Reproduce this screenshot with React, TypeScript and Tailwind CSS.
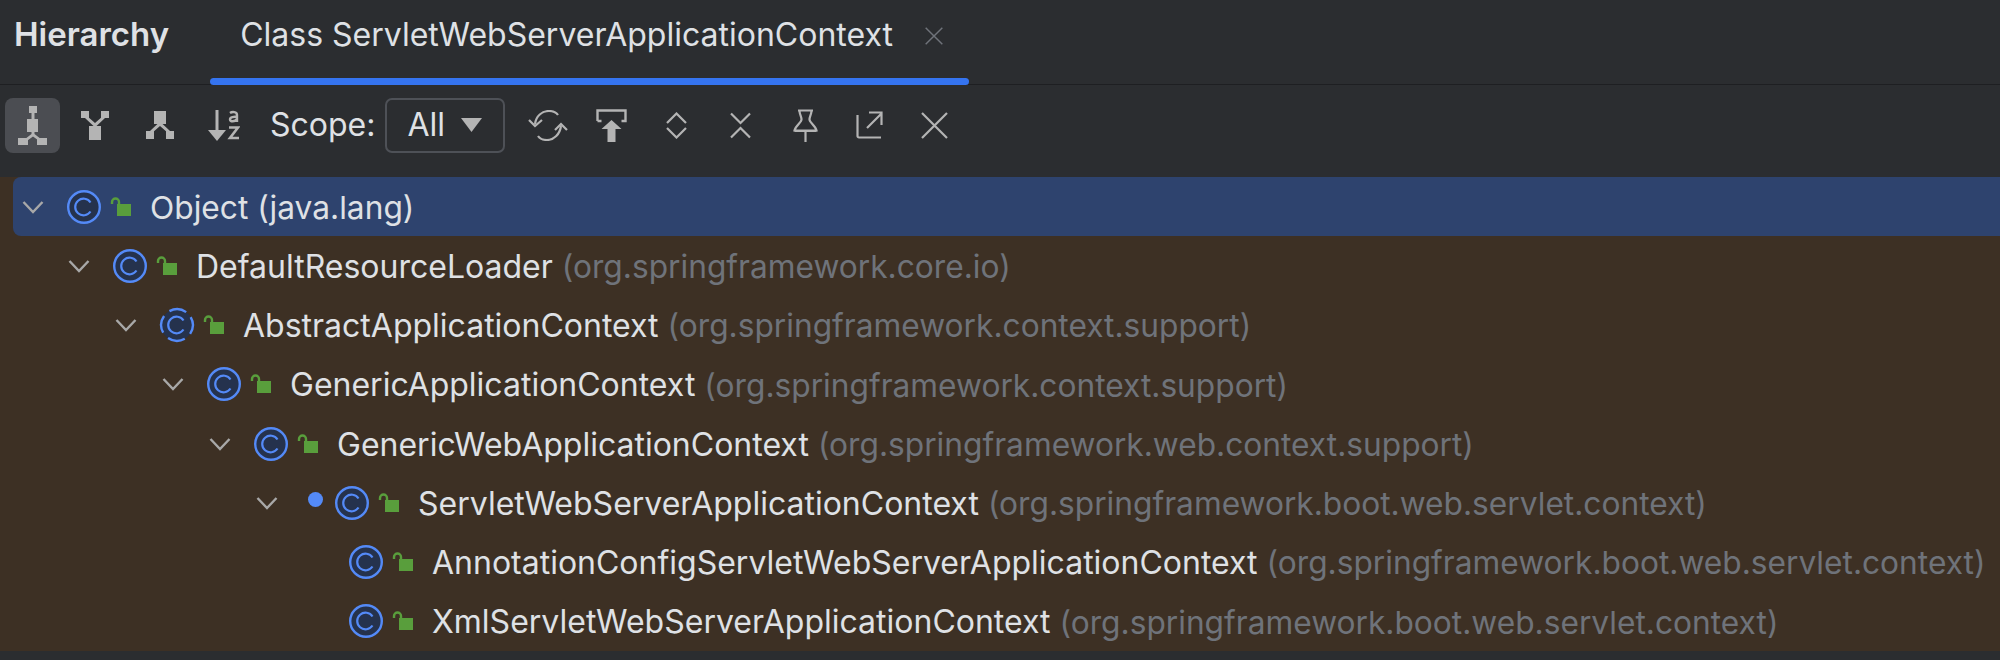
const F = "#b4b4b4";

const TreeIcon = () => (
  <svg width="29" height="39" viewBox="0 0 29 39" fill={F}>
    <rect x="11" y="0" width="8" height="7" />
    <rect x="13.500" y="7" width="3" height="6" />
    <rect x="9" y="13" width="11" height="13" />
    <path d="M13.500 26h3v2l9 7-1.500 2-9-6.500L6 37l-1.500-2 9-7z" />
    <rect x="0" y="32" width="10" height="7" />
    <rect x="19" y="32" width="10" height="7" />
  </svg>
);

const SuperIcon = () => (
  <svg width="28" height="29" viewBox="0 0 28 29" fill={F}>
    <rect x="0" y="0" width="8" height="7" />
    <rect x="20" y="0" width="8" height="7" />
    <rect x="8" y="15" width="12" height="14" />
    <path d="M6 5l8 7 8-7 2 2-8.500 8h-3L4 7z" />
  </svg>
);

const SubIcon = () => (
  <svg width="28" height="28" viewBox="0 0 28 28" fill={F}>
    <rect x="8" y="0" width="12" height="13" />
    <rect x="0" y="20" width="8" height="8" />
    <rect x="20" y="20" width="8" height="8" />
    <path d="M12.500 12h3L24 20l-2 2-8-7-8 7-2-2z" />
  </svg>
);

const SortIcon = () => (
  <svg width="32" height="31" viewBox="0 0 32 31">
    <path d="M9 0v24" fill="none" stroke={F} strokeWidth="3" />
    <path d="M0 20h18l-9 11z" fill={F} />
    <path d="M22 3c2-1.500 7-1.500 7 2V12M29 7c-3-.5-7 0-7 2.500s5 2.500 7-.5" fill="none" stroke={F} strokeWidth="2.400" />
    <path d="M21 17.500h9l-8 10.500h9" fill="none" stroke={F} strokeWidth="2.600" />
  </svg>
);

const stroke = { fill: "none", stroke: F, strokeWidth: 2.2 };

const SyncIcon = () => (
  <svg width="40" height="31" viewBox="0 0 40 31" {...stroke}>
    <path d="M7 14c1-8 7-13 14-13 4 0 7 1 9 4" />
    <path d="M1 10l6 6 7-6" />
    <path d="M33 16c-1 8-7 14-14 14-4 0-7-1-9-4" />
    <path d="M27 20l6-6 6 6" />
  </svg>
);

const ExportIcon = () => (
  <svg width="31" height="33" viewBox="0 0 31 33">
    <path d="M1.500 12V1.500h28V12h-4M1.500 12h4" fill="none" stroke={F} strokeWidth="2.400" />
    <path d="M15.500 11l10 9h-6v13h-8V20h-6z" fill={F} />
  </svg>
);

const ExpandIcon = () => (
  <svg width="21" height="27" viewBox="0 0 21 27" {...stroke}>
    <path d="M1 11l9.500-9.500L20 11" />
    <path d="M1 16l9.500 9.500L20 16" />
  </svg>
);

const CollapseIcon = () => (
  <svg width="21" height="27" viewBox="0 0 21 27" {...stroke}>
    <path d="M1 1.500l9.500 9.500L20 1.500" />
    <path d="M1 25.500L10.500 16l9.500 9.500" />
  </svg>
);

const PinIcon = () => (
  <svg width="25" height="33" viewBox="0 0 25 33" {...stroke}>
    <path d="M5 1.500h15M6.500 1.500c0 4 2 6 2 9 0 3-6 6-7 11h22c-1-5-7-8-7-11 0-3 2-5 2-9" />
    <path d="M1.500 22h22M12.500 22v11" />
  </svg>
);

const OpenIcon = () => (
  <svg width="27" height="28" viewBox="0 0 27 28" {...stroke}>
    <path d="M1.500 4v21a1.500 1.500 0 0 0 1.500 1.500h22" />
    <path d="M11 17L26 2M13 1.500h12.500V14" />
  </svg>
);

const CloseIcon = ({ size = 27, color = F }: { size?: number; color?: string }) => (
  <svg width={size} height={size} viewBox="0 0 27 27" fill="none" stroke={color} strokeWidth="2.200">
    <path d="M1 1l25 25M26 1L1 26" />
  </svg>
);

const Chevron = () => (
  <svg width="22" height="14" viewBox="0 0 22 14" fill="none" stroke="#a8a8a8" strokeWidth="2.400">
    <path d="M1.500 2l9.500 10 9.500-10" />
  </svg>
);

const ClassIcon = ({ dashed }: { dashed?: boolean }) => (
  <svg width="36" height="36" viewBox="0 0 36 36" className="shrink-0">
    <circle
      cx="18"
      cy="18"
      r="15.800"
      fill="#25324d"
      stroke="#548af7"
      strokeWidth="2.400"
      strokeDasharray={dashed ? "17.500 7.300" : undefined}
      transform={dashed ? "rotate(-30 18 18)" : undefined}
    />
    <path d="M24.500 13.500a8.300 8.300 0 1 0 0 9" fill="none" stroke="#548af7" strokeWidth="2.200" />
  </svg>
);

const LockIcon = () => (
  <svg width="21" height="20" viewBox="0 0 21 20" className="shrink-0">
    <path d="M2 7V5a3.500 3.500 0 0 1 7 0v2" fill="none" stroke="#599e3c" strokeWidth="2.400" />
    <rect x="7" y="7" width="14" height="12" fill="#599e3c" />
  </svg>
);

type Row = {
  name: string;
  pkg: string;
  indent: string;
  leaf?: boolean;
  dashed?: boolean;
  dot?: boolean;
  selected?: boolean;
};

const rows: Row[] = [
  { name: "Object", pkg: "(java.lang)", indent: "pl-[22px]", selected: true },
  { name: "DefaultResourceLoader", pkg: "(org.springframework.core.io)", indent: "pl-[68px]" },
  { name: "AbstractApplicationContext", pkg: "(org.springframework.context.support)", indent: "pl-[115px]", dashed: true },
  { name: "GenericApplicationContext", pkg: "(org.springframework.context.support)", indent: "pl-[162px]" },
  { name: "GenericWebApplicationContext", pkg: "(org.springframework.web.context.support)", indent: "pl-[209px]" },
  { name: "ServletWebServerApplicationContext", pkg: "(org.springframework.boot.web.servlet.context)", indent: "pl-[256px]", dot: true },
  { name: "AnnotationConfigServletWebServerApplicationContext", pkg: "(org.springframework.boot.web.servlet.context)", indent: "pl-[348px]", leaf: true },
  { name: "XmlServletWebServerApplicationContext", pkg: "(org.springframework.boot.web.servlet.context)", indent: "pl-[348px]", leaf: true },
];

const TreeRow = ({ row }: { row: Row }) => (
  <div
    className={`flex h-[59.25px] items-center ${row.indent} ${row.selected ? "ml-[13px] -mr-[13px] rounded-l-[8px] !pl-[9px] bg-[#2e436e]" : ""}`}
  >
    {!row.leaf && (
      <span className="mr-[22px] flex w-[22px] shrink-0 justify-center">
        <Chevron />
      </span>
    )}
    {row.dot && <span className="mr-[11px] ml-[8px] h-[15px] w-[15px] shrink-0 -translate-y-[3px] rounded-full bg-[#548af7]" />}
    <ClassIcon dashed={row.dashed} />
    <span className="mr-[19px] ml-[8px]">
      <LockIcon />
    </span>
    <span className={`whitespace-nowrap pt-[2px] text-[#dfe1e5] ${row.selected ? "text-[31.7px]" : ""}`}>
      {row.selected ? `${row.name} ${row.pkg}` : row.name}
    </span>
    {!row.selected && <span className="ml-[9px] whitespace-nowrap pt-[2px] text-[31.7px] text-[#6f737a]">{row.pkg}</span>}
  </div>
);

export default function App() {
  return (
    <div className="flex h-[660px] w-[2000px] flex-col overflow-hidden bg-[#2b2d30] font-['Inter',sans-serif] text-[32px] text-[#dfe1e5]">
      {/* tool window header */}
      <div className="flex h-[85px] shrink-0 items-start border-b border-[#1e1f22]">
        <span className="mt-[10px] ml-[14px] text-[33px] font-semibold text-[#dfe1e5]">Hierarchy</span>
        <div className="relative ml-[41px] flex h-full w-[759px] items-start pl-[30px]">
          <span className="mt-[11px] whitespace-nowrap">Class ServletWebServerApplicationContext</span>
          <span className="mt-[27px] ml-[32px]">
            <CloseIcon size={18} color="#6f737a" />
          </span>
          <div className="absolute inset-x-0 bottom-[-1px] h-[7px] rounded-full bg-[#3574f0]" />
        </div>
      </div>

      {/* toolbar */}
      <div className="flex h-[92px] shrink-0 items-center pb-[12px] pl-[5px]">
        <button className="flex h-[55px] w-[55px] items-center justify-center rounded-[8px] bg-[#4b4d52]">
          <TreeIcon />
        </button>
        <span className="ml-[21px] flex"><SuperIcon /></span>
        <span className="ml-[37px] flex"><SubIcon /></span>
        <span className="ml-[34px] flex"><SortIcon /></span>
        <span className="ml-[30px]">Scope:</span>
        <div className="ml-[10px] flex h-[55px] w-[120px] items-center rounded-[7px] border-2 border-[#4e5157] pl-[20px]">
          All
          <svg width="21" height="14" viewBox="0 0 21 14" className="ml-[16px]" fill={F}>
            <path d="M0 0h21L10.500 14z" />
          </svg>
        </div>
        <span className="ml-[23px] flex"><SyncIcon /></span>
        <span className="ml-[28px] flex"><ExportIcon /></span>
        <span className="ml-[39px] flex"><ExpandIcon /></span>
        <span className="ml-[43px] flex"><CollapseIcon /></span>
        <span className="ml-[42px] flex"><PinIcon /></span>
        <span className="ml-[38px] flex"><OpenIcon /></span>
        <span className="ml-[38px] flex"><CloseIcon /></span>
      </div>

      {/* hierarchy tree */}
      <div className="h-[474px] shrink-0 overflow-hidden bg-[#3d3024]">
        {rows.map((row) => (
          <TreeRow key={row.name} row={row} />
        ))}
      </div>
    </div>
  );
}
